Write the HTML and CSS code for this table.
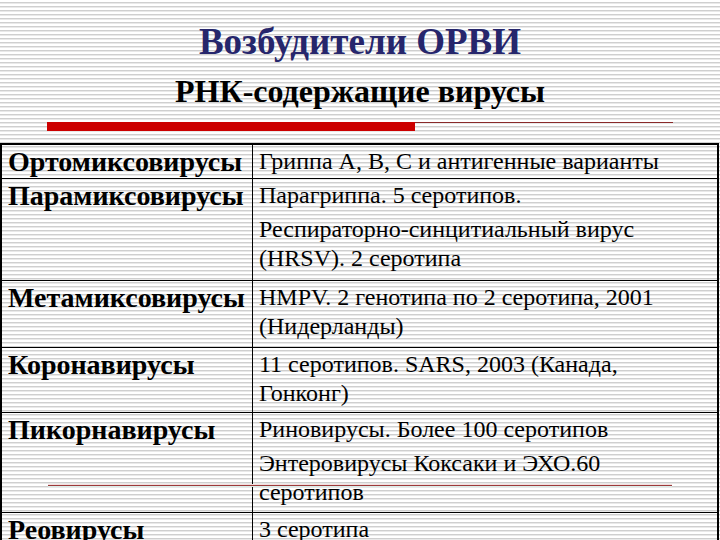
FILE: index.html
```html
<!DOCTYPE html>
<html lang="ru">
<head>
<meta charset="utf-8">
<link rel="stylesheet" href="styles.css">
</head>
<body>
<div class="slide">
  <header class="head">
    <h1 class="title">Возбудители ОРВИ</h1>
    <h2 class="subtitle">РНК-содержащие вирусы</h2>
  </header>
  <div class="rule">
    <span class="rule-bar"></span>
    <span class="rule-line"></span>
  </div>
  <table class="grid">
    <tr class="r1">
      <td class="name">Ортомиксовирусы</td>
      <td class="desc"><p>Гриппа А, В, С и антигенные варианты</p></td>
    </tr>
    <tr class="r2">
      <td class="name">Парамиксовирусы</td>
      <td class="desc"><p>Парагриппа. 5 серотипов.</p><p class="next">Респираторно-синцитиальный вирус (HRSV). 2 серотипа</p></td>
    </tr>
    <tr class="r3">
      <td class="name">Метамиксовирусы</td>
      <td class="desc"><p>HMPV. 2 генотипа по 2 серотипа, 2001 (Нидерланды)</p></td>
    </tr>
    <tr class="r4">
      <td class="name">Коронавирусы</td>
      <td class="desc"><p>11 серотипов. SARS, 2003 (Канада, Гонконг)</p></td>
    </tr>
    <tr class="r5">
      <td class="name">Пикорнавирусы</td>
      <td class="desc"><p>Риновирусы. Более 100 серотипов</p><p class="next">Энтеровирусы Коксаки и ЭХО.60 серотипов</p></td>
    </tr>
    <tr class="r6">
      <td class="name">Реовирусы</td>
      <td class="desc"><p>3 серотипа</p></td>
    </tr>
  </table>
  <div class="deco-line"></div>
</div>
</body>
</html>
```

FILE: styles.css
```css
html, body {
  margin: 0;
  padding: 0;
}
body {
  width: 720px;
  height: 540px;
  overflow: hidden;
  background: repeating-linear-gradient(to bottom, #ffffff 0 2px, #cfcfcf 2px 3px, #e9e9e9 3px 4px);
  font-family: "Liberation Serif", "Times New Roman", serif;
  color: #000;
}
.slide {
  position: relative;
  width: 720px;
  height: 540px;
  overflow: hidden;
}
.head {
  text-align: center;
  padding-top: 21px;
}
.title {
  margin: 0;
  font-size: 37px;
  line-height: 42px;
  font-weight: bold;
  color: #26266c;
}
.subtitle {
  margin: 9px 0 0;
  font-size: 32px;
  line-height: 38px;
  font-weight: bold;
  color: #000;
}
.rule {
  display: flex;
  align-items: flex-start;
  margin: 12px 0 0 47px;
  height: 9px;
}
.rule-bar {
  width: 368px;
  height: 9px;
  background: #cc0000;
}
.rule-line {
  width: 258px;
  height: 1px;
  background: #8a2a2a;
}
.grid {
  margin-top: 12px;
  width: 719px;
  border-collapse: collapse;
  border-top: 2px solid #000;
  border-left: 2px solid #000;
  border-right: 2px solid #000;
}
.grid td {
  border-top: 1px solid #000;
  vertical-align: top;
  padding: 0 6px;
}
.grid td.name {
  width: 238px;
  border-right: 1px solid #000;
  font-size: 28px;
  font-weight: bold;
  line-height: 30px;
  padding-top: 2px;
}
.grid td.desc {
  font-size: 24px;
  line-height: 29px;
  padding-top: 2px;
}
.desc p {
  margin: 0;
}
.desc p.next {
  margin-top: 5px;
}
.r1 { height: 34px; }
.r2 { height: 102px; }
.r3 { height: 67px; }
.r4 { height: 65px; }
.r5 { height: 100px; }
.r6 { height: 26px; }
.deco-line {
  position: absolute;
  left: 48px;
  top: 485px;
  width: 624px;
  height: 1px;
  background: #9c3a3a;
  box-shadow: 0 1px 0 #d8ece8, 0 -1px 0 #f3dede;
}
```
